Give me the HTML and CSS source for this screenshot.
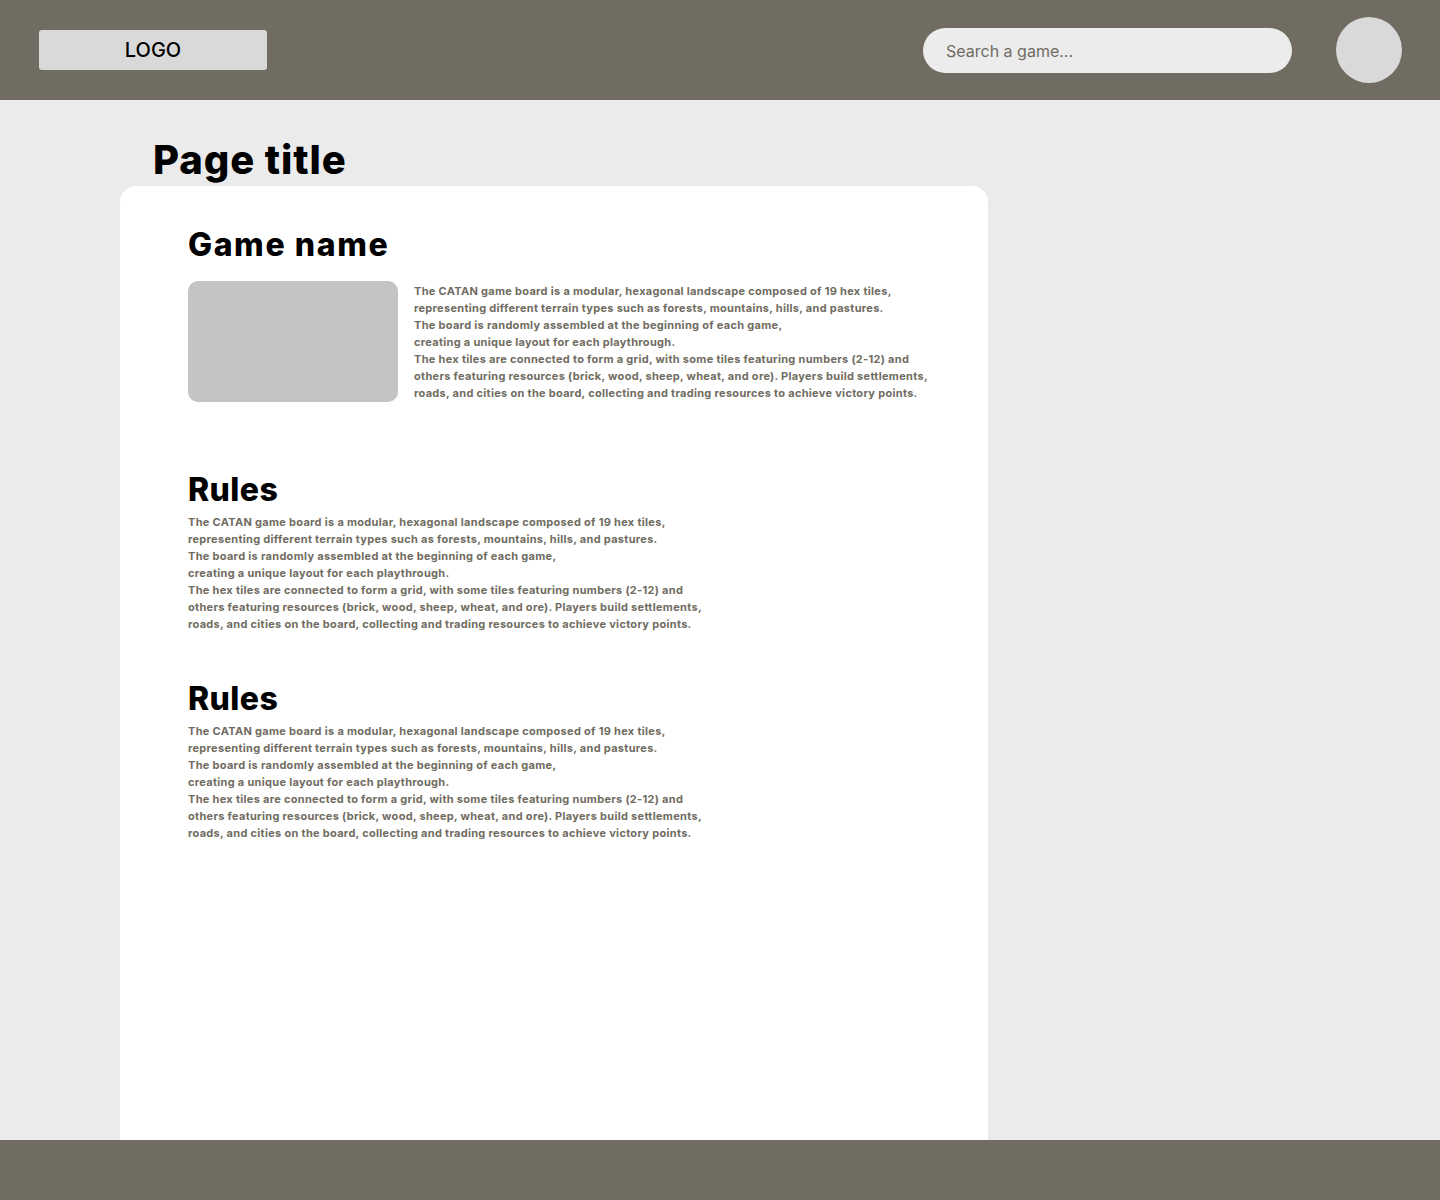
FILE: index.html
```html
<!DOCTYPE html>
<html lang="en">
<head>
  <meta charset="UTF-8">
  <title>Game page</title>
  <link rel="stylesheet" href="styles.css">
</head>
<body>
  <header class="topbar">
    <div class="logo">LOGO</div>
    <div class="topbar-right">
      <input type="text" class="search" placeholder="Search a game...">
      <div class="avatar"></div>
    </div>
  </header>

  <main class="main">
    <h1 class="page-title">Page title</h1>
    <section class="card">
      <h2 class="section-title game-name">Game name</h2>
      <div class="game-info">
        <div class="thumb"></div>
        <p class="text">
          The CATAN game board is a modular, hexagonal landscape composed of 19 hex tiles,<br>
          representing different terrain types such as forests, mountains, hills, and pastures.<br>
          The board is randomly assembled at the beginning of each game,<br>
          creating a unique layout for each playthrough.<br>
          The hex tiles are connected to form a grid, with some tiles featuring numbers (2-12) and<br>
          others featuring resources (brick, wood, sheep, wheat, and ore). Players build settlements,<br>
          roads, and cities on the board, collecting and trading resources to achieve victory points.
        </p>
      </div>

      <div class="rules">
        <h2 class="section-title">Rules</h2>
        <p class="text">
          The CATAN game board is a modular, hexagonal landscape composed of 19 hex tiles,<br>
          representing different terrain types such as forests, mountains, hills, and pastures.<br>
          The board is randomly assembled at the beginning of each game,<br>
          creating a unique layout for each playthrough.<br>
          The hex tiles are connected to form a grid, with some tiles featuring numbers (2-12) and<br>
          others featuring resources (brick, wood, sheep, wheat, and ore). Players build settlements,<br>
          roads, and cities on the board, collecting and trading resources to achieve victory points.
        </p>
      </div>

      <div class="rules">
        <h2 class="section-title">Rules</h2>
        <p class="text">
          The CATAN game board is a modular, hexagonal landscape composed of 19 hex tiles,<br>
          representing different terrain types such as forests, mountains, hills, and pastures.<br>
          The board is randomly assembled at the beginning of each game,<br>
          creating a unique layout for each playthrough.<br>
          The hex tiles are connected to form a grid, with some tiles featuring numbers (2-12) and<br>
          others featuring resources (brick, wood, sheep, wheat, and ore). Players build settlements,<br>
          roads, and cities on the board, collecting and trading resources to achieve victory points.
        </p>
      </div>
    </section>
  </main>

  <footer class="footer"></footer>
</body>
</html>
```

FILE: styles.css
```css
* {
  box-sizing: border-box;
}
body {
  margin: 0;
  font-family: Inter, "Open Sans", sans-serif;
  background: #ebebeb;
  color: #000;
  height: 1200px;
  display: flex;
  flex-direction: column;
  overflow: hidden;
}
.topbar {
  height: 100px;
  flex-shrink: 0;
  background: #706c61;
  display: flex;
  align-items: center;
  justify-content: space-between;
  padding: 0 38px 0 39px;
}
.logo {
  width: 228px;
  height: 40px;
  background: #d9d9d9;
  border-radius: 3px;
  display: flex;
  align-items: center;
  justify-content: center;
  font-size: 20px;
  font-weight: 500;
}
.topbar-right {
  display: flex;
  align-items: center;
  gap: 44px;
}
.search {
  width: 369px;
  height: 45px;
  border: none;
  border-radius: 23px;
  background: #ececec;
  padding: 0 23px;
  font-family: inherit;
  font-size: 16px;
  outline: none;
  margin-top: 1px;
}
.search::placeholder {
  color: #6f6b62;
}
.avatar {
  width: 66px;
  height: 66px;
  border-radius: 50%;
  background: #d9d9d9;
}
.main {
  flex: 1;
  padding: 0 0 0 120px;
  display: flex;
  flex-direction: column;
  min-height: 0;
}
.page-title {
  margin: 34px 0 0 33px;
  font-size: 40px;
  font-weight: 800;
  line-height: 52px;
  letter-spacing: 0.9px;
}
.card {
  width: 868px;
  flex: 1;
  background: #fff;
  border-radius: 16px 16px 0 0;
  padding: 38px 68px 0;
}
.section-title {
  margin: 0;
  font-size: 32px;
  font-weight: 800;
  line-height: 42px;
  letter-spacing: 0.4px;
}
.game-name {
  letter-spacing: 1.6px;
}
.game-info {
  display: flex;
  gap: 16px;
  margin-top: 15px;
}
.thumb {
  width: 210px;
  height: 121px;
  flex-shrink: 0;
  background: #c4c4c4;
  border-radius: 10px;
}
.text {
  margin: 0;
  font-size: 11px;
  font-weight: 700;
  line-height: 17px;
  letter-spacing: 0.3px;
  color: #706c61;
  white-space: nowrap;
}
.game-info .text {
  padding-top: 2px;
}
.rules {
  margin-top: 67px;
}
.rules .text {
  margin-top: 3px;
}
.rules + .rules {
  margin-top: 45px;
}
.footer {
  height: 60px;
  flex-shrink: 0;
  background: #706c61;
}
```
